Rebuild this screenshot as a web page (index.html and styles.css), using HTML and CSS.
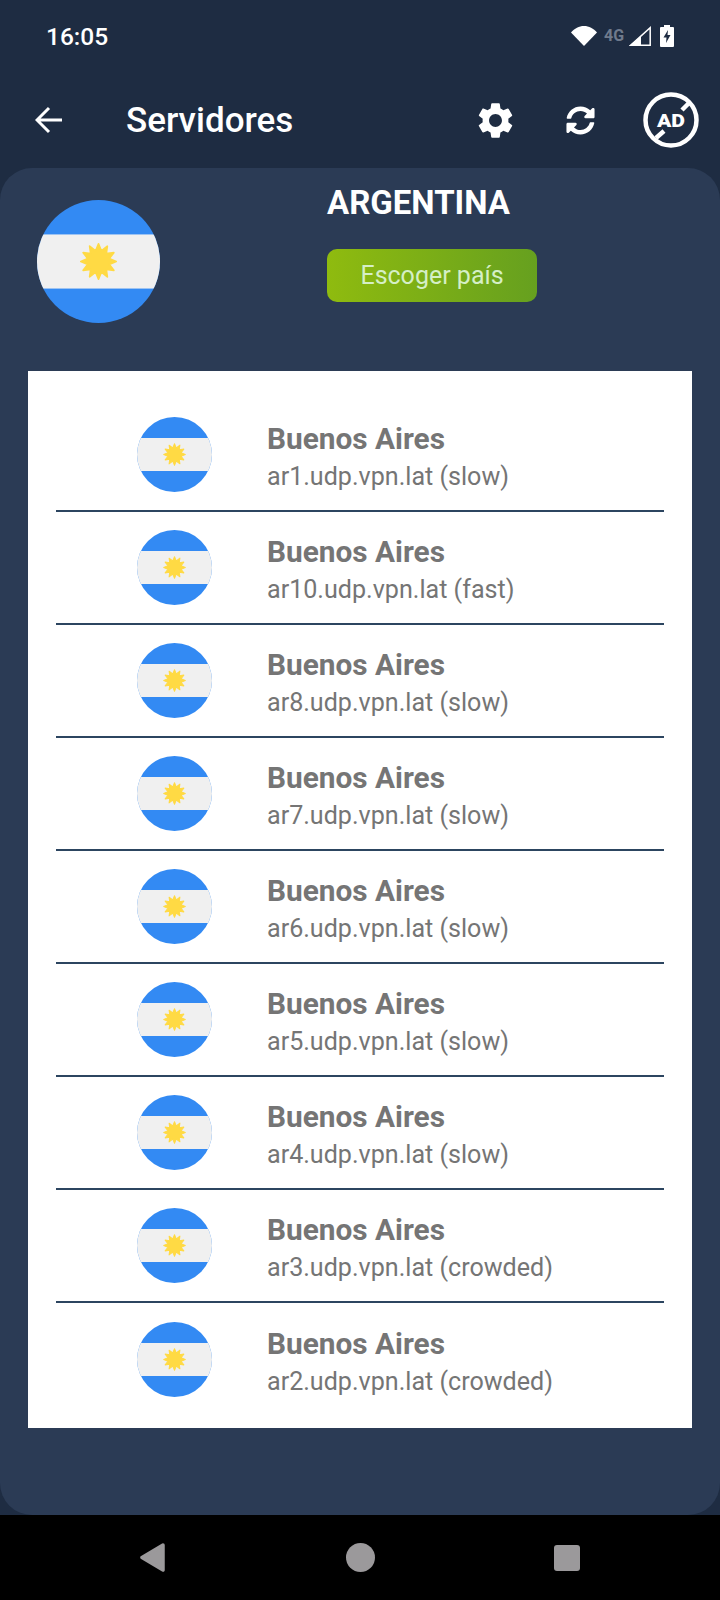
FILE: index.html
```html
<!DOCTYPE html>
<html lang="es">
  <head>
    <meta charset="utf-8" />
    <meta name="viewport" content="width=device-width, initial-scale=1.0" />
    <title>Servidores</title>
    <link rel="stylesheet" href="styles.css">
  </head>
  <body>
    <svg class="defs" width="0" height="0">
      <symbol id="flag-ar" viewBox="0 0 100 100">
        <clipPath id="flag-clip"><circle cx="50" cy="50" r="50" /></clipPath>
        <g clip-path="url(#flag-clip)">
          <rect width="100" height="100" fill="#338af3" />
          <rect y="28" width="100" height="44" fill="#f0f0f0" />
        </g>
        <polygon fill="#ffda44" stroke="#ffda44" stroke-width="1.500" stroke-linejoin="round" transform="translate(50 50) scale(.9) translate(-50 -50)" points="66,50 59.660,52.590 63.860,58 57.070,57.070 58,63.860 52.590,59.660 50,66 47.410,59.660 42,63.860 42.930,57.070 36.140,58 40.340,52.590 34,50 40.340,47.410 36.140,42 42.930,42.930 42,36.140 47.410,40.340 50,34 52.590,40.340 58,36.140 57.070,42.930 63.860,42 59.660,47.410" />
      </symbol>
    </svg>

    <div class="status-bar">
      <span class="clock">16:05</span>
      <div class="status-icons">
        <svg class="ic-wifi" viewBox="0 0 26 20"><path d="M13 20 0 6.500C3.500 2.500 8 0 13 0s9.500 2.500 13 6.500z" fill="#fff" /></svg>
        <span class="net">4G</span>
        <svg class="ic-signal" viewBox="0 0 22 20">
          <path d="M21.200 1.800V19.200H1.800z" fill="none" stroke="#fff" stroke-width="1.500" />
          <path d="M12 10V20H0z" fill="#fff" />
        </svg>
        <svg class="ic-battery" viewBox="0 0 14 22">
          <path d="M4 0h6v2h3a1 1 0 0 1 1 1v18a1 1 0 0 1-1 1H1a1 1 0 0 1-1-1V3a1 1 0 0 1 1-1h3z" fill="#fff" />
          <path d="M8 5 3.500 12.500H6.500L6 18l4.500-8H7.500z" fill="#1e2c42" />
        </svg>
      </div>
    </div>

    <header class="toolbar">
      <svg class="ic-back" viewBox="0 0 28 28"><path d="M27 14H2M14 2 2 14l12 12" fill="none" stroke="#fff" stroke-width="3" /></svg>
      <h1 class="page-title">Servidores</h1>
      <svg class="ic-gear" viewBox="0 0 24 24"><path d="M19.140 12.940c.04-.3.060-.61.060-.94 0-.32-.020-.64-.070-.94l2.030-1.580a.49.49 0 0 0 .12-.61l-1.920-3.320a.488.488 0 0 0-.59-.22l-2.390.96c-.5-.38-1.030-.7-1.620-.94l-.36-2.540a.484.484 0 0 0-.48-.41h-3.840c-.24 0-.43.17-.47.41l-.36 2.540c-.59.24-1.130.57-1.620.94l-2.390-.96c-.22-.08-.47 0-.59.22L2.740 8.870c-.12.21-.08.47.12.61l2.030 1.580c-.05.3-.09.63-.09.94s.020.64.070.94l-2.030 1.580a.49.49 0 0 0-.12.61l1.920 3.320c.12.22.37.29.59.22l2.390-.96c.5.38 1.030.7 1.620.94l.36 2.540c.05.24.24.41.48.41h3.840c.24 0 .44-.17.47-.41l.36-2.540c.59-.24 1.130-.56 1.620-.94l2.390.96c.22.08.47 0 .59-.22l1.920-3.320c.12-.22.07-.47-.12-.61l-2.010-1.580zM12 15.600c-1.980 0-3.600-1.620-3.600-3.600s1.620-3.600 3.600-3.600 3.600 1.620 3.600 3.600-1.620 3.600-3.600 3.600z" fill="#fff" /></svg>
      <svg class="ic-sync" viewBox="0 0 512 512"><path d="M370.720 133.280C339.458 104.008 298.888 87.962 255.848 88c-77.458.068-144.328 53.178-162.791 126.850-1.344 5.363-6.122 9.150-11.651 9.150H24.103c-7.498 0-13.194-6.807-11.807-14.176C33.933 94.924 134.813 8 256 8c66.448 0 126.791 26.136 171.315 68.685L463.030 40.970C478.149 25.851 504 36.559 504 57.941V192c0 13.255-10.745 24-24 24H345.941c-21.382 0-32.090-25.851-16.971-40.971l41.750-41.749zM32 296h134.059c21.382 0 32.090 25.851 16.971 40.971l-41.750 41.750c31.262 29.273 71.835 45.319 114.876 45.280 77.418-.07 144.315-53.144 162.787-126.849 1.344-5.363 6.122-9.150 11.651-9.150h57.304c7.498 0 13.194 6.807 11.807 14.176C478.067 417.076 377.187 504 256 504c-66.448 0-126.791-26.136-171.315-68.685L48.970 471.030C33.851 486.149 8 475.441 8 454.059V320c0-13.255 10.745-24 24-24z" fill="#fff" /></svg>
      <svg class="ic-noad" viewBox="0 0 58 58">
        <circle cx="29" cy="29" r="25.500" fill="none" stroke="#fff" stroke-width="4.500" />
        <path d="M48 11 40 19M22 40l-8 7" stroke="#fff" stroke-width="4.500" />
        <text x="29" y="35.500" class="noad-text" textLength="28" lengthAdjust="spacingAndGlyphs">AD</text>
      </svg>
    </header>

    <main class="card">
      <div class="card-head">
        <svg class="flag-big"><use href="#flag-ar" /></svg>
        <div class="country">
          <h2 class="country-name">ARGENTINA</h2>
          <button class="pick-btn">Escoger país</button>
        </div>
      </div>

      <ul class="server-list">
        <li class="server"><svg class="flag"><use href="#flag-ar" /></svg><div class="server-text"><div class="city">Buenos Aires</div><div class="host">ar1.udp.vpn.lat (slow)</div></div></li>
        <li class="server"><svg class="flag"><use href="#flag-ar" /></svg><div class="server-text"><div class="city">Buenos Aires</div><div class="host">ar10.udp.vpn.lat (fast)</div></div></li>
        <li class="server"><svg class="flag"><use href="#flag-ar" /></svg><div class="server-text"><div class="city">Buenos Aires</div><div class="host">ar8.udp.vpn.lat (slow)</div></div></li>
        <li class="server"><svg class="flag"><use href="#flag-ar" /></svg><div class="server-text"><div class="city">Buenos Aires</div><div class="host">ar7.udp.vpn.lat (slow)</div></div></li>
        <li class="server"><svg class="flag"><use href="#flag-ar" /></svg><div class="server-text"><div class="city">Buenos Aires</div><div class="host">ar6.udp.vpn.lat (slow)</div></div></li>
        <li class="server"><svg class="flag"><use href="#flag-ar" /></svg><div class="server-text"><div class="city">Buenos Aires</div><div class="host">ar5.udp.vpn.lat (slow)</div></div></li>
        <li class="server"><svg class="flag"><use href="#flag-ar" /></svg><div class="server-text"><div class="city">Buenos Aires</div><div class="host">ar4.udp.vpn.lat (slow)</div></div></li>
        <li class="server"><svg class="flag"><use href="#flag-ar" /></svg><div class="server-text"><div class="city">Buenos Aires</div><div class="host">ar3.udp.vpn.lat (crowded)</div></div></li>
        <li class="server"><svg class="flag"><use href="#flag-ar" /></svg><div class="server-text"><div class="city">Buenos Aires</div><div class="host">ar2.udp.vpn.lat (crowded)</div></div></li>
      </ul>
    </main>

    <nav class="nav-bar">
      <svg class="nav-back" viewBox="0 0 27 29"><path d="M24 2 3 14.500 24 27z" fill="#9b999b" stroke="#9b999b" stroke-width="3.500" stroke-linejoin="round" /></svg>
      <span class="nav-home"></span>
      <span class="nav-recent"></span>
    </nav>
  </body>
</html>
```

FILE: styles.css
```css
* {
  box-sizing: border-box;
}

body {
  margin: 0;
  width: 720px;
  height: 1600px;
  display: flex;
  flex-direction: column;
  background: #1e2c42;
  font-family: Roboto, sans-serif;
  overflow: hidden;
}

.defs {
  position: absolute;
}

.status-bar {
  height: 72px;
  display: flex;
  align-items: center;
  justify-content: space-between;
  padding: 0 46px 0 46px;
}

.clock {
  color: #fff;
  font-size: 24.500px;
  font-weight: 500;
}

.status-icons {
  display: flex;
  align-items: center;
}

.ic-wifi {
  width: 26px;
  height: 20px;
}

.net {
  margin: 0 5px 0 7px;
  width: 20px;
  color: #6f7a8c;
  font-size: 16px;
  font-weight: 700;
  line-height: 20px;
}

.ic-signal {
  width: 22px;
  height: 20px;
}

.ic-battery {
  width: 14px;
  height: 22px;
  margin-left: 9px;
}

.toolbar {
  height: 96px;
  display: flex;
  align-items: center;
  padding: 0 0 0 35px;
}

.ic-back {
  width: 28px;
  height: 28px;
}

.page-title {
  margin: 0 0 0 63px;
  width: 348px;
  color: #fff;
  font-size: 35px;
  font-weight: 500;
}

.ic-gear {
  width: 43px;
  height: 43px;
}

.ic-sync {
  width: 29px;
  height: 29px;
  margin-left: 49px;
}

.ic-noad {
  width: 58px;
  height: 58px;
  margin-left: 47px;
}

.noad-text {
  fill: #fff;
  font-family: Roboto, sans-serif;
  font-size: 19px;
  font-weight: 900;
  text-anchor: middle;
}

.card {
  flex: 1;
  background: #2b3b55;
  border-radius: 32px;
}

.card-head {
  height: 203px;
  display: flex;
  padding: 32px 0 0 37px;
}

.flag-big {
  width: 123px;
  height: 123px;
}

.country {
  margin: -32px 0 0 167px;
  width: 210px;
  display: flex;
  flex-direction: column;
  align-items: center;
}

.country-name {
  margin: 16px 27px 0 0;
  color: #fff;
  font-size: 33px;
  font-weight: 700;
  line-height: 38px;
}

.pick-btn {
  margin-top: 27px;
  width: 210px;
  height: 53px;
  border: 0;
  border-radius: 10px;
  background: linear-gradient(90deg, #8fbb0f, #66a01f);
  color: #d5efc6;
  font-family: Roboto, sans-serif;
  font-size: 25px;
}

.server-list {
  margin: 0 28px;
  padding: 28px 28px 12px;
  list-style: none;
  background: #fff;
}

.server {
  height: 113px;
  display: flex;
  align-items: center;
  gap: 55px;
  padding-left: 81px;
  border-bottom: 2px solid #2c4560;
}

.server:last-child {
  border-bottom: 0;
}

.flag {
  width: 75px;
  height: 75px;
}

.server-text {
  padding-top: 4px;
}

.city {
  color: #757575;
  font-size: 29.800px;
  font-weight: 700;
  line-height: 36px;
}

.host {
  margin-top: 5px;
  color: #757575;
  font-size: 25.100px;
  line-height: 30px;
}

.nav-bar {
  height: 85px;
  display: flex;
  align-items: center;
  background: #000;
}

.nav-back {
  width: 27px;
  height: 29px;
  margin-left: 139px;
}

.nav-home {
  width: 29px;
  height: 29px;
  margin-left: 180px;
  border-radius: 50%;
  background: #9b999b;
}

.nav-recent {
  width: 26px;
  height: 26px;
  margin-left: 179px;
  border-radius: 3px;
  background: #9b999b;
}
```
